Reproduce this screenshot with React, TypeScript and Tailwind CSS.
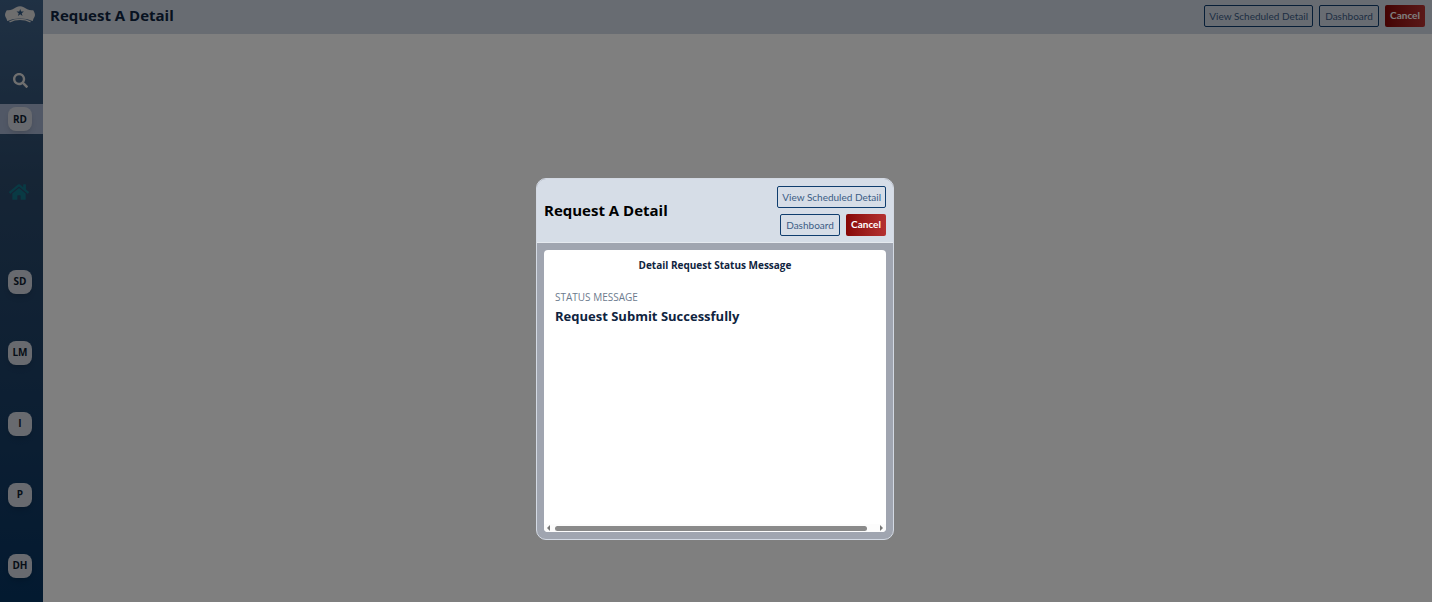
import React from "react";
import { FaSearch, FaHome } from "react-icons/fa";

const shortcuts = [
  { code: "SD", label: "Scheduled Details" },
  { code: "LM", label: "List Management" },
  { code: "I", label: "Incidents" },
  { code: "P", label: "Properties" },
  { code: "DH", label: "Detail History" },
];

function CapLogo() {
  return (
    <svg viewBox="0 0 30 18" className="h-[18px] w-[30px]" aria-hidden="true">
      <path
        d="M1.800 4.200 C4 4.400 6 4.200 7.700 3.300 C10 2 12.500 .3 15 .3 C17.500 .3 20 2 22.300 3.300 C24 4.200 26 4.400 28.200 4.200 C29 5.500 30 7.500 30 9 C30 10.800 28.500 12 27.900 14.400 C27.700 15 27.200 15 26.600 14.800 C20 11.600 10 11.600 3.400 14.800 C2.800 15 2.300 15 2.100 14.400 C1.500 12 0 10.800 0 9 C0 7.500 1 5.500 1.800 4.200 Z"
        fill="#dcdcdc"
      />
      <path d="M4.500 15.900 C11 12.900 19 12.900 25.500 15.900" fill="none" stroke="#dcdcdc" strokeWidth="1.200" />
      <path
        d="M15.200 2.900 L16.100 5.500 L18.900 5.500 L16.700 7.200 L17.500 9.900 L15.200 8.300 L12.900 9.900 L13.700 7.200 L11.500 5.500 L14.300 5.500 Z"
        fill="#2f5680"
      />
    </svg>
  );
}

function Badge({ code, label }: { code: string; label: string }) {
  return (
    <a
      href="#"
      aria-label={label}
      className="flex size-6 items-center justify-center rounded-lg bg-[#d0d5de] text-[10px] font-bold text-[#0e1c30] shadow-md"
    >
      {code}
    </a>
  );
}

function Actions() {
  const outline =
    "h-[22px] rounded-xs border border-[#0f3d6e] px-1 font-['Lato','Open_Sans',sans-serif] text-[10px] leading-5 text-[#3b5c85] whitespace-nowrap";
  return (
    <div className="flex flex-wrap justify-end gap-[6px]">
      <button className={outline}>View Scheduled Detail</button>
      <button className={`${outline} min-w-[60px]`}>Dashboard</button>
      <button className="h-[22px] min-w-10 rounded-xs bg-linear-to-r from-[#870505] to-[#b53131] px-1 font-['Lato','Open_Sans',sans-serif] text-[10px] font-bold text-white">
        Cancel
      </button>
    </div>
  );
}

export default function App() {
  return (
    <div className="flex h-screen overflow-hidden bg-white font-['Open_Sans','Noto_Sans',sans-serif]">
      <nav className="flex w-[43px] shrink-0 flex-col bg-linear-to-b from-[#3f6288] via-[#2c4a6b] via-30% to-[#063461]">
        <div className="flex h-[58px] justify-center pr-[3px] pt-[6px]">
          <CapLogo />
        </div>
        <button aria-label="Search" className="flex h-[46px] items-center justify-center pb-[2px] pr-[3px] text-[#dedede]">
          <FaSearch size={15} />
        </button>
        <div className="flex h-[30px] items-center bg-[#a2b0cc] pl-2">
          <Badge code="RD" label="Request A Detail" />
        </div>
        <a href="#" aria-label="Home" className="flex h-[112px] items-center justify-center pr-[5px] pt-1 text-[#137489]">
          <FaHome size={20} />
        </a>
        {shortcuts.map((s) => (
          <div key={s.code} className="flex h-[71px] shrink-0 items-center pl-2">
            <Badge {...s} />
          </div>
        ))}
      </nav>
      <main className="mr-[3px] flex-1">
        <header className="flex h-[34px] items-center justify-between bg-[#d0d8e5] px-[7px] pb-[3px]">
          <h1 className="text-[15px] font-bold text-[#0f2440]">Request A Detail</h1>
          <Actions />
        </header>
      </main>

      <div className="fixed inset-y-0 left-0 right-[3px] flex items-end justify-center bg-black/50 pb-[62px]">
        <section
          role="dialog"
          aria-modal="true"
          aria-labelledby="dialog-title"
          className="mr-[2px] flex h-[362px] w-1/4 flex-col overflow-hidden rounded-[10px] border border-[#d3d9e3] bg-[#a0a5b0]"
        >
          <div className="flex h-16 shrink-0 items-center justify-between border-b border-[#e5e9ef] bg-[#d6dde7] px-[7px]">
            <h2 id="dialog-title" className="shrink-0 text-[15px] font-bold text-black">
              Request A Detail
            </h2>
            <div className="w-32">
              <Actions />
            </div>
          </div>
          <div className="flex flex-1 p-[7px]">
            <div className="flex flex-1 flex-col rounded bg-white">
              <h3 className="pt-[5px] text-center text-[10px] leading-5 font-bold text-[#0f2440]">
                Detail Request Status Message
              </h3>
              <div className="flex-1 px-[11px] pt-3">
                <p className="text-[10px] leading-5 text-[#6c7b8e]">STATUS MESSAGE</p>
                <p className="text-[13px] leading-[18px] font-bold text-[#0f2440]">Request Submit Successfully</p>
              </div>
              <div className="flex h-2 items-center justify-between rounded-b bg-[#fcfcfc] px-[3px]" aria-hidden="true">
                <svg viewBox="0 0 3 6" className="h-[6px] w-[3px]">
                  <path d="M3 0 L0 3 L3 6 Z" fill="#777" />
                </svg>
                <div className="mx-[5px] flex-1 pr-2">
                  <div className="h-[5px] rounded-full bg-[#8a8a8a]" />
                </div>
                <svg viewBox="0 0 3 6" className="h-[6px] w-[3px]">
                  <path d="M0 0 L3 3 L0 6 Z" fill="#777" />
                </svg>
              </div>
            </div>
          </div>
        </section>
      </div>
    </div>
  );
}
